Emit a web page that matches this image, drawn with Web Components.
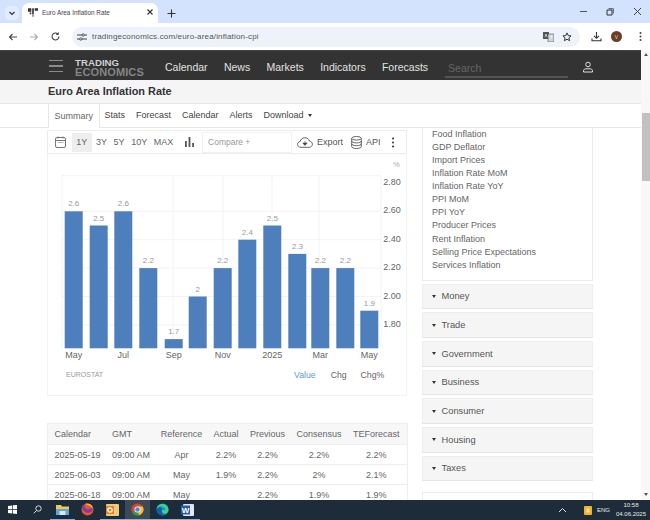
<!DOCTYPE html>
<html lang="en">
<head>
<meta charset="utf-8">
<title>Euro Area Inflation Rate</title>
<style>
  html, body { margin: 0; height: 520px; overflow: hidden; background: #fff; }
  body { display: flex; flex-direction: column; font-family: "Liberation Sans", Arial, sans-serif; color: #666; }
</style>
</head>
<body>
<browser-tabs></browser-tabs>
<browser-toolbar></browser-toolbar>
<page-frame>
  <site-nav></site-nav>
  <page-title>Euro Area Inflation Rate</page-title>
  <page-tabs></page-tabs>
  <page-body>
    <chart-toolbar slot="left"></chart-toolbar>
    <bar-chart slot="left"></bar-chart>
    <calendar-table slot="left"></calendar-table>
    <related-list slot="right"></related-list>
    <side-group slot="right">Money</side-group>
    <side-group slot="right">Trade</side-group>
    <side-group slot="right">Government</side-group>
    <side-group slot="right">Business</side-group>
    <side-group slot="right">Consumer</side-group>
    <side-group slot="right">Housing</side-group>
    <side-group slot="right">Taxes</side-group>
    <side-stub slot="right"></side-stub>
  </page-body>
</page-frame>
<task-bar></task-bar>

<script>
/**
 * Registers a custom element whose shadow root holds the given markup.
 *
 * @param {string} name - The tag name.
 * @param {string} html - Styles and markup of the shadow root.
 */
function define (name, html) {
  const template = document.createElement('template')
  template.innerHTML = html
  customElements.define(name, class extends HTMLElement {
    constructor () {
      super()
      this.attachShadow({ mode: 'open' }).appendChild(template.content.cloneNode(true))
    }
  })
}

define('browser-tabs', `
  <style>
    :host { display: flex; align-items: flex-end; height: 23px; background: #d3e3fd; flex: none; box-sizing: border-box; padding-left: 5px; }
    .caret { width: 14px; height: 14px; border-radius: 5px; background: #e3ecfb; margin: 0 3px 3px 0; display: flex; align-items: center; justify-content: center; }
    .tab { width: 136px; height: 20px; background: #fff; border-radius: 7px 7px 0 0; display: flex; align-items: center; box-sizing: border-box; padding: 0 4px 2px 6px; font-size: 6.4px; color: #444; }
    .tab span { margin-left: 4px; flex: 1; }
    .plus { margin: 0 0 3px 7px; width: 12px; height: 14px; display: flex; align-items: center; justify-content: center; }
    .win { margin-left: auto; display: flex; align-items: center; height: 23px; padding-right: 8px; gap: 19px; }
    svg { display: block; }
  </style>
  <div class="caret"><svg width="8" height="8" viewBox="0 0 8 8"><path d="M1.5 3l2.5 2.5L6.5 3" fill="none" stroke="#333" stroke-width="1.2"/></svg></div>
  <div class="tab">
    <svg width="10" height="9" viewBox="0 0 12 10"><path d="M0 0h4v4H0zM5 0h2v7H5zM8 0h4v3H8zM2 5h2v2H2z" fill="#333"/><path d="M5 7h2v3H5z" fill="#888"/></svg>
    <span>Euro Area Inflation Rate</span>
    <svg width="8" height="8" viewBox="0 0 8 8"><path d="M1.5 1.5l5 5M6.5 1.5l-5 5" stroke="#333" stroke-width="1.1"/></svg>
  </div>
  <div class="plus"><svg width="9" height="9" viewBox="0 0 9 9"><path d="M4.500.5v8M.5 4.500h8" stroke="#333" stroke-width="1.1"/></svg></div>
  <div class="win">
    <svg width="7" height="7" viewBox="0 0 7 7"><path d="M0 3.500h7" stroke="#555"/></svg>
    <svg width="8" height="8" viewBox="0 0 8 8"><path d="M1 2h5v5H1z" fill="none" stroke="#333"/><path d="M2.500.7H7.300V5.500" fill="none" stroke="#333" stroke-width=".8"/></svg>
    <svg width="9" height="9" viewBox="0 0 9 9"><path d="M1 1l7 7M8 1l-7 7" stroke="#444" stroke-width="1"/></svg>
  </div>
`)

define('browser-toolbar', `
  <style>
    :host { display: flex; align-items: center; height: 27px; background: #fff; flex: none; padding-left: 8px; box-sizing: border-box; }
    svg { display: block; flex: none; }
    .nav { display: flex; gap: 11px; align-items: center; }
    .pill { margin-left: 11px; width: 508px; height: 20px; border-radius: 10px; background: #eef3fb; display: flex; align-items: center; box-sizing: border-box; padding: 0 8px 0 5px; font-size: 8px; color: #555; }
    .pill span { margin-left: 5px; flex: 1; letter-spacing: .02em; }
    .pill .star { margin-left: 8px; }
    .end { display: flex; align-items: center; margin-left: 11px; gap: 9px; }
    .avatar { width: 11px; height: 11px; border-radius: 50%; background: #6b3f25; color: #e8d8b8; font-size: 5px; display: flex; align-items: center; justify-content: center; }
  </style>
  <div class="nav">
    <svg width="10" height="10" viewBox="0 0 10 10"><path d="M9 5H1.500M4.500 2L1.500 5l3 3" fill="none" stroke="#444" stroke-width="1.1"/></svg>
    <svg width="10" height="10" viewBox="0 0 10 10"><path d="M1 5h7.500M5.500 2l3 3-3 3" fill="none" stroke="#aaa" stroke-width="1.1"/></svg>
    <svg width="11" height="11" viewBox="0 0 11 11"><path d="M9 5.500A3.500 3.500 0 1 1 8 3" fill="none" stroke="#444" stroke-width="1.1"/><path d="M8.700 1v3h-3z" fill="#444"/></svg>
  </div>
  <div class="pill">
    <svg width="10" height="8" viewBox="0 0 10 8"><path d="M0 2h5M7.500 2H10M0 6h2.500M5 6h5" stroke="#444" stroke-width="1.1"/><circle cx="6.200" cy="2" r="1.200" fill="none" stroke="#444" stroke-width=".9"/><circle cx="3.800" cy="6" r="1.200" fill="none" stroke="#444" stroke-width=".9"/></svg>
    <span>tradingeconomics.com/euro-area/inflation-cpi</span>
    <svg width="11" height="11" viewBox="0 0 11 11"><path d="M0 1h6v7H0z" fill="#555"/><path d="M5 3h6v8H5z" fill="#ccd3dd" stroke="#555" stroke-width=".6"/><path d="M2 6l1-3 1 3M7 5h3M8.500 5c0 2-1 3-1.500 3.500" fill="none" stroke="#fff" stroke-width=".6"/></svg>
    <svg class="star" width="10" height="10" viewBox="0 0 10 10"><path d="M5 .9l1.200 2.700 2.900.3-2.200 1.900.7 2.900L5 7.200 2.400 8.700l.7-2.900L.9 3.900l2.900-.3z" fill="none" stroke="#333" stroke-width="1"/></svg>
  </div>
  <div class="end">
    <svg width="11" height="11" viewBox="0 0 11 11"><path d="M5.500 1v6M3 4.800l2.500 2.500L8 4.800" fill="none" stroke="#333" stroke-width="1.100"/><path d="M1 7.500v2.300h9V7.500" fill="none" stroke="#333" stroke-width="1.100"/></svg>
    <div class="avatar">V</div>
    <svg width="11" height="11" viewBox="0 0 11 11" style="margin-left:4px"><circle cx="5.500" cy="2" r="1" fill="#444"/><circle cx="5.500" cy="5.500" r="1" fill="#444"/><circle cx="5.500" cy="9" r="1" fill="#444"/></svg>
  </div>
`)

define('page-frame', `
  <style>
    :host { display: flex; height: 450px; flex: none; overflow: hidden; }
    .page { flex: 1; min-width: 0; display: flex; flex-direction: column; }
    .bar { width: 9px; background: #f8f8f8; display: flex; flex-direction: column; align-items: center; box-sizing: border-box; padding-top: 3px; }
    .thumb { width: 8px; height: 68px; background: #c1c1c1; margin: 57px 0 0 1px; }
    .up, .down { width: 0; height: 0; border-left: 2.500px solid transparent; border-right: 2.500px solid transparent; }
    .up { border-bottom: 3px solid #555; }
    .down { border-top: 3px solid #555; margin-top: auto; margin-bottom: 4px; }
  </style>
  <div class="page"><slot></slot></div>
  <div class="bar"><div class="up"></div><div class="thumb"></div><div class="down"></div></div>
`)

define('site-nav', `
  <style>
    :host { display: flex; align-items: center; height: 30px; background: #333; flex: none; box-sizing: border-box; border-top: 1px solid #444; padding-left: 49px; font-size: 10.500px; color: #e2e2e2; }
    .burger { width: 14px; display: flex; flex-direction: column; gap: 4px; margin-top: 1px; }
    .burger i { display: block; height: 1.500px; background: #8a8a8a; }
    .logo { margin-left: 12px; width: 70px; font-weight: bold; line-height: 8.500px; margin-top: 4px; }
    .logo b { display: block; font-size: 9.700px; color: #d0d0d0; }
    .logo b + b { font-size: 11px; color: #858585; letter-spacing: .01em; }
    .links { display: flex; gap: 16.300px; margin-left: 20px; margin-top: 3px; }
    .search { margin-left: 17px; width: 123px; box-sizing: border-box; border-bottom: 2px solid #555; color: #666; padding: 2px 3px 2px; margin-top: 6px; }
    svg { display: block; margin-left: 14px; margin-top: 2px; }
  </style>
  <div class="burger"><i></i><i></i><i></i></div>
  <div class="logo"><b>TRADING</b><b>ECONOMICS</b></div>
  <div class="links"><span>Calendar</span><span>News</span><span>Markets</span><span>Indicators</span><span>Forecasts</span></div>
  <div class="search">Search</div>
  <svg width="12" height="12" viewBox="0 0 12 12"><circle cx="6" cy="3.500" r="2.300" fill="none" stroke="#ddd" stroke-width="1"/><path d="M1.500 11V9.800c0-1.300 1.200-2 2.300-2h4.400c1.100 0 2.300.7 2.300 2V11z" fill="none" stroke="#ddd" stroke-width="1"/></svg>
`)

define('page-title', `
  <style>
    :host { display: flex; align-items: center; height: 23px; flex: none; background: #f5f5f5; padding-left: 48px; font-size: 10.900px; font-weight: bold; color: #333; box-sizing: border-box; padding-bottom: 2px; }
  </style>
  <slot></slot>
`)

define('page-tabs', `
  <style>
    :host { display: flex; align-items: stretch; gap: 11px; height: 25px; flex: none; box-sizing: border-box; background: #fff; border-top: 1px solid #e6e6e6; border-bottom: 1px solid #e6e6e6; padding-left: 48px; font-size: 9px; color: #444; }
    span { display: flex; align-items: center; padding-bottom: 1px; }
    .on { border: solid #e6e6e6; border-width: 0 1px; background: #fff; padding: 0 5.500px 1px; margin-bottom: -1px; color: #666; margin-right: -6px; }
    .caret { width: 0; height: 0; border-left: 2.500px solid transparent; border-right: 2.500px solid transparent; border-top: 3px solid #333; margin: 0 0 0 4px; }
  </style>
  <span class="on">Summary</span><span>Stats</span><span>Forecast</span><span>Calendar</span><span>Alerts</span><span>Download<i class="caret"></i></span>
`)

define('page-body', `
  <style>
    :host { display: flex; flex: 1; min-height: 0; overflow: hidden; padding-left: 47px; gap: 15px; }
    .left { width: 360px; flex: none; padding-top: 2px; }
    .right { width: 170.500px; flex: none; display: flex; flex-direction: column; gap: 3px; }
  </style>
  <div class="left"><slot name="left"></slot></div>
  <div class="right"><slot name="right"></slot></div>
`)

define('chart-toolbar', `
  <style>
    :host { display: flex; align-items: center; height: 24px; box-sizing: border-box; border: 1px solid #ececec; font-size: 9px; color: #666; padding-left: 7px; }
    svg { display: block; flex: none; }
    .range { display: flex; align-items: stretch; height: 19px; margin-left: 6px; }
    .range span { display: flex; align-items: center; padding: 0 3.300px; }
    .range .on { background: #eeeeee; padding: 0 4.300px; margin-right: 1px; }
    .compare { margin-left: 7.500px; width: 90px; height: 21px; box-sizing: border-box; border: 1px solid #f2f2f2; display: flex; align-items: center; padding-left: 5px; color: #999; font-size: 8.500px; }
    .export { display: flex; align-items: center; gap: 4px; margin-left: 5px; color: #555; }
    .dots { margin-left: 10px; }
  </style>
  <svg width="11" height="12" viewBox="0 0 11 12"><rect x=".5" y="1.500" width="10" height="10" rx="1.500" fill="none" stroke="#777"/><path d="M.5 4.500h10M3 .5v2M8 .5v2" stroke="#777"/><path d="M2.500 6.500h6" stroke="#bbb"/></svg>
  <div class="range"><span class="on">1Y</span><span>3Y</span><span>5Y</span><span>10Y</span><span>MAX</span></div>
  <svg width="11" height="10" viewBox="0 0 11 10" style="margin-left:7px"><path d="M1 4h1.800v6H1zM4.600 0h1.800v10H4.600zM8.200 6H10v4H8.200z" fill="#555"/></svg>
  <div class="compare">Compare +</div>
  <div class="export">
    <svg width="16" height="11" viewBox="0 0 16 11"><path d="M4 10.300C2 10.300.6 9 .6 7.300c0-1.500 1-2.600 2.500-2.800C3.600 2.300 5.500.7 7.800.7c2.400 0 4.200 1.500 4.700 3.500 1.700.2 2.900 1.400 2.900 3 0 1.800-1.400 3.100-3.200 3.100z" fill="none" stroke="#555" stroke-width=".9"/><path d="M8 4v3.800M5.800 6l2.200 2.400L10.200 6z" fill="#444" stroke="#444" stroke-width=".6"/></svg>
    <span>Export</span>
  </div>
  <div class="export" style="margin-left:8px">
    <svg width="11" height="13" viewBox="0 0 11 13"><ellipse cx="5.500" cy="2.300" rx="4.800" ry="1.800" fill="none" stroke="#555" stroke-width=".9"/><path d="M.7 2.300v8.400c0 1 2.100 1.800 4.800 1.800s4.800-.8 4.800-1.800V2.300M.7 5.100c0 1 2.100 1.800 4.800 1.800s4.800-.8 4.800-1.800M.7 7.900c0 1 2.100 1.800 4.800 1.800s4.800-.8 4.800-1.800" fill="none" stroke="#555" stroke-width=".9"/></svg>
    <span>API</span>
  </div>
  <svg class="dots" width="4" height="11" viewBox="0 0 4 11"><circle cx="2" cy="1.500" r="1.100" fill="#444"/><circle cx="2" cy="5.500" r="1.100" fill="#444"/><circle cx="2" cy="9.500" r="1.100" fill="#444"/></svg>
`)

define('bar-chart', `
  <style>
    :host { display: block; box-sizing: border-box; height: 242px; border: solid #f3f3f3; border-width: 0 1px 1px; }
    svg { display: block; margin-left: -1px; }
    .foot { display: flex; align-items: flex-start; padding: 3px 0 0 18px; font-size: 8.700px; color: #666; }
    .source { font-size: 7px; color: #999; margin-right: 191px; padding-top: 1px; }
    .on { color: #5b9bd0; margin-right: 15px; }
    .chg { margin-right: 14px; }
  </style>
  <svg id="plot" width="360" height="213" viewBox="47 155 360 213" font-family="Liberation Sans, Arial, sans-serif"></svg>
  <div class="foot"><span class="source">EUROSTAT</span><span class="on">Value</span><span class="chg">Chg</span><span>Chg%</span></div>
`)

define('calendar-table', `
  <style>
    :host { display: block; margin-top: 27px; font-size: 9px; color: #666; }
    table { width: 360px; table-layout: fixed; border-collapse: collapse; border: 1px solid #eee; }
    th, td { font-weight: normal; padding: 0; text-align: center; height: 20px; border-bottom: 1.500px solid #eee; box-sizing: border-box; }
    th { height: 21px; background: #f7f7f7; padding-bottom: 1px; }
    th:nth-child(-n+2), td:nth-child(-n+2) { text-align: left; padding-left: 6.500px; }
    th:last-child, td:last-child { padding-right: 2px; }
  </style>
  <table>
    <colgroup><col style="width:58px"><col style="width:50px"><col style="width:52px"><col style="width:37px"><col style="width:46px"><col style="width:57px"><col style="width:60px"></colgroup>
    <tr><th>Calendar</th><th>GMT</th><th>Reference</th><th>Actual</th><th>Previous</th><th>Consensus</th><th>TEForecast</th></tr>
    <tr><td>2025-05-19</td><td>09:00 AM</td><td>Apr</td><td>2.2%</td><td>2.2%</td><td>2.2%</td><td>2.2%</td></tr>
    <tr><td>2025-06-03</td><td>09:00 AM</td><td>May</td><td>1.9%</td><td>2.2%</td><td>2%</td><td>2.1%</td></tr>
    <tr><td>2025-06-18</td><td>09:00 AM</td><td>May</td><td></td><td>2.2%</td><td>1.9%</td><td>1.9%</td></tr>
  </table>
`)

define('related-list', `
  <style>
    :host { display: flex; flex-direction: column; flex: none; box-sizing: border-box; height: 153px; border: 1px solid #ececec; border-width: 0 1px 1px; padding: 0 0 0 9px; font-size: 9px; line-height: 13.140px; color: #666; margin-top: -0.500px; }
  </style>
  <span>Food Inflation</span><span>GDP Deflator</span><span>Import Prices</span><span>Inflation Rate MoM</span><span>Inflation Rate YoY</span><span>PPI MoM</span><span>PPI YoY</span><span>Producer Prices</span><span>Rent Inflation</span><span>Selling Price Expectations</span><span>Services Inflation</span>
`)

define('side-group', `
  <style>
    :host { display: flex; align-items: center; flex: none; height: 25.700px; box-sizing: border-box; background: #f5f5f5; border: 1px solid #eeeeee; border-bottom-color: #e4e4e4; padding-left: 9px; font-size: 9.300px; color: #555; }
    i { width: 0; height: 0; border-left: 2.500px solid transparent; border-right: 2.500px solid transparent; border-top: 3px solid #333; margin-right: 5.500px; }
  </style>
  <i></i><slot></slot>
`)

define('side-stub', `
  <style>
    :host { display: block; flex: none; height: 30px; margin-top: 8px; border: 1px solid #ececec; }
  </style>
`)

define('task-bar', `
  <style>
    :host { display: flex; align-items: stretch; height: 20px; flex: none; background: #1d2c38; color: #e8e8e8; font-size: 6px; }
    svg { display: block; }
    .slot { width: 25px; display: flex; align-items: center; justify-content: center; box-sizing: border-box; border-bottom: 1.500px solid transparent; }
    .run { border-bottom-color: #7fb4dc; }
    .on { background: #3c4a55; }
    .tray { margin-left: auto; display: flex; align-items: center; }
    .clock { text-align: center; line-height: 9px; margin-left: 6px; padding-right: 4px; width: 30px; }
    .eng { margin-left: 5px; }
    .word { font: bold 8px "Liberation Sans", Arial, sans-serif; fill: #fff; }
  </style>
  <div class="slot"><svg width="9" height="9" viewBox="0 0 9 9"><path d="M0 1l4-.6V4H0zM4.700.3L9 0v4H4.700zM0 4.700h4v3.900L0 8zM4.700 4.700H9V9l-4.300-.6z" fill="#fff"/></svg></div>
  <div class="slot"><svg width="9" height="9" viewBox="0 0 9 9"><circle cx="5.500" cy="3.500" r="2.700" fill="none" stroke="#ddd"/><path d="M3.500 5.500L.8 8.300" stroke="#ddd"/></svg></div>
  <div class="slot run"><svg width="13" height="11" viewBox="0 0 13 11"><path d="M0 1h5l1 1.500h7V11H0z" fill="#f2c65a"/><path d="M0 5h13v6H0z" fill="#5aa7d8"/><path d="M3.500 7h6v4h-6z" fill="#d8e8f2"/></svg></div>
  <div class="slot"><svg width="13" height="13" viewBox="0 0 13 13"><circle cx="6.500" cy="6.500" r="6" fill="#e8562c"/><path d="M1 4c1 5 5 7 9 5 2-1 2-4 .5-6 0 3-3 4-5 3S3 3 4 1C2.500 1.500 1.500 3 1 4z" fill="#7b3bb0"/><path d="M4 1c2-1 5-.5 7 2l1 3-3-3z" fill="#f9b233"/></svg></div>
  <div class="slot run"><svg width="13" height="12" viewBox="0 0 13 12"><rect width="13" height="12" rx="1" fill="#f4c877"/><rect x="0" y="2" width="8" height="8" fill="#d9862a"/><circle cx="4" cy="6" r="2.200" fill="none" stroke="#fff" stroke-width="1.200"/></svg></div>
  <div class="slot run on"><svg width="13" height="13" viewBox="0 0 13 13"><circle cx="6.500" cy="6.500" r="6" fill="#db4437"/><path d="M6.500 6.500L1.300 9.500A6 6 0 0 0 8 12.300z" fill="#2f9e52"/><path d="M6.500 6.500L8 12.300A6 6 0 0 0 11.700 3.500H6.500z" fill="#f6c02c"/><circle cx="6.500" cy="6.500" r="3" fill="#fff"/><circle cx="6.500" cy="6.500" r="2.300" fill="#4285f4"/></svg></div>
  <div class="slot run"><svg width="13" height="13" viewBox="0 0 13 13"><circle cx="6.500" cy="6.500" r="6" fill="#1b8fc9"/><path d="M12.500 7c0-3.500-2.700-6-6-6C3.500 1 1 3 .6 6c1.200-2 3-2.800 5-2.600 2.500.3 4 1.800 4 3.500H6c-.5 1.800.8 3.800 3 3.800 2 0 3.500-1.800 3.500-3.700z" fill="#3fd08a"/><path d="M6 6.800c-1 2.200.5 5 3.500 5-1 .6-2 .8-3 .7C3 12.300.6 9.500.6 6.500 2 4.500 4 4 6 5z" fill="#0f5ea8"/></svg></div>
  <div class="slot run"><svg width="13" height="12" viewBox="0 0 13 12"><rect x="2" width="11" height="12" rx="1" fill="#dfe9f7"/><rect y="1.500" width="9" height="9" fill="#2b5ea8"/><text x="4.500" y="9" text-anchor="middle" class="word">W</text></svg></div>
  <div class="tray">
    <svg width="9" height="6" viewBox="0 0 9 6" style="margin-right:17px"><path d="M1 5l3.500-3.500L8 5" fill="none" stroke="#ddd"/></svg>
    <svg width="8" height="9" viewBox="0 0 8 9"><rect width="8" height="9" rx="1" fill="#f0b429"/><rect x="2.500" y="2.500" width="3" height="4" fill="#fbe3a4"/></svg>
    <span class="eng">ENG</span>
    <div class="clock">10:58<br>04.06.2025</div>
  </div>
`)

// Bars sit on dates, so the spacing is not even.
const bars = [
  [64.7, 2.6, 'May'], [89.7, 2.5], [114.3, 2.6, 'Jul'], [139.3, 2.2], [164.7, 1.7, 'Sep'],
  [188.7, 2], [213.7, 2.2, 'Nov'], [238.3, 2.4], [263.3, 2.5, '2025'], [288.3, 2.3],
  [311.3, 2.2, 'Mar'], [336.3, 2.2], [360.3, 1.9, 'May']
]
const yOf = value => 212.3 + (2.6 - value) * 142
const base = 349.3
const left = 62
const right = 381

let plot = ''
for (const y of [176.7, 212.3, 240.7, 269.1, 297.5, 325.9]) {
  plot += `<path d="M${left} ${y}H${right}" stroke="#f3f3f3"/>`
}
for (const x of [62, 173, 223, 272, 319, 381]) {
  plot += `<path d="M${x} 176.700V${base}" stroke="#f3f3f3"/>`
}
plot += `<text x="393" y="168" font-size="7.500" fill="#aaa">%</text>`
for (const [label, y] of [['2.80', 186], ['2.60', 214.4], ['2.40', 242.8], ['2.20', 271.2], ['2.00', 299.6], ['1.80', 328]]) {
  plot += `<text x="383.300" y="${y}" font-size="9" fill="#666">${label}</text>`
}
for (const [x, value, month] of bars) {
  const top = yOf(value)
  plot += `<rect x="${x}" y="${top}" width="18" height="${base - top}" fill="#4c7fbc"/>`
  plot += `<text x="${x + 9}" y="${top - 5}" font-size="8" fill="#999" text-anchor="middle">${value}</text>`
  if (month) plot += `<text x="${x + 9}" y="358.500" font-size="9" fill="#666" text-anchor="middle">${month}</text>`
}
document.querySelector('bar-chart').shadowRoot.querySelector('#plot').innerHTML = plot
</script>
</body>
</html>
